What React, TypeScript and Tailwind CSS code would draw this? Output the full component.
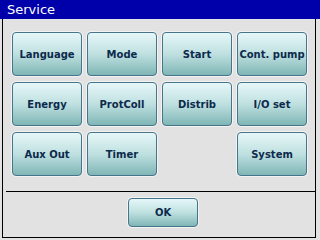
import React from "react";

const Btn = ({ label, className = "" }: { label: string; className?: string }) => (
  <div
    className={
      "flex items-center justify-center rounded-[4px] border border-[#46748a] bg-gradient-to-b from-[#e6f7f8] via-[#bfe0e0] to-[#80b6b6] text-[10px] font-bold text-[#0c2a4c] shadow-[0_0_0_1px_rgba(255,255,255,0.6)] " +
      className
    }
    style={{ fontFamily: '"DejaVu Sans", sans-serif' }}
  >
    {label}
  </div>
);

export default function App() {
  const rows = [
    ["Language", "Mode", "Start", "Cont. pump"],
    ["Energy", "ProtColl", "Distrib", "I/O set"],
    ["Aux Out", "Timer", "", "System"],
  ];
  return (
    <div className="w-[320px] h-[240px] bg-[#e2e2e2] flex flex-col overflow-hidden">
      <div
        className="h-[19px] bg-[#0000aa] text-white text-[13px] leading-[19px] pl-[7px]"
        style={{ fontFamily: '"DejaVu Sans", sans-serif' }}
      >
        Service
      </div>
      <div className="ml-[2px] w-[314px] h-[219px] border-l border-r border-b border-black flex flex-col">
        <div className="pl-[9px] pt-[13px] grid grid-cols-[70px_70px_70px_70px] grid-rows-[44px_44px_44px] gap-x-[5px] gap-y-[6px]">
          {rows.flat().map((l, i) =>
            l ? <Btn key={i} label={l} /> : <div key={i} />
          )}
        </div>
        <div className="ml-[3px] mt-[15px] h-px bg-black" />
        <div className="pl-[125px] pt-[6px]">
          <Btn label="OK" className="w-[70px] h-[29px]" />
        </div>
      </div>
    </div>
  );
}
